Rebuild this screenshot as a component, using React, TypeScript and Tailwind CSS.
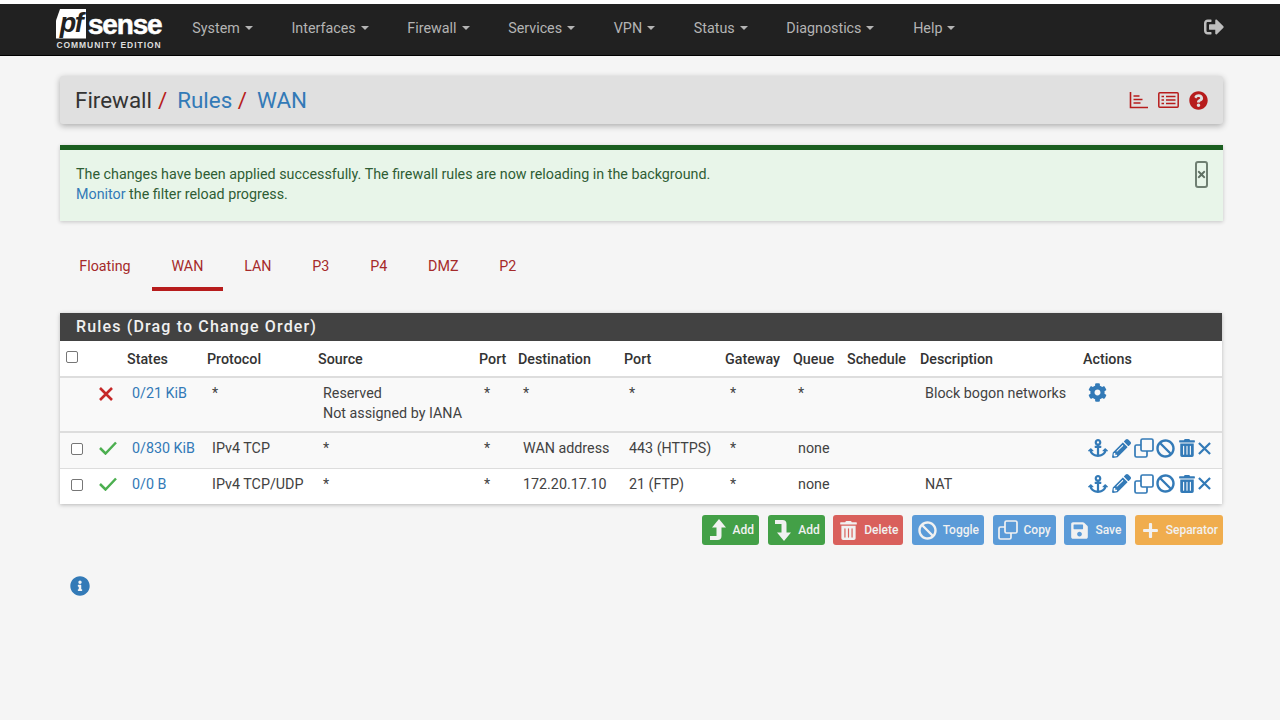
import { FaAnchor, FaBan, FaCog, FaInfoCircle, FaPencilAlt, FaPlus, FaQuestionCircle, FaSave, FaSignOutAlt, FaTimes, FaTrashAlt } from "react-icons/fa";

const menu = ["System", "Interfaces", "Firewall", "Services", "VPN", "Status", "Diagnostics", "Help"];
const tabs = ["Floating", "WAN", "LAN", "P3", "P4", "DMZ", "P2"];

function Logo() {
  return (
    <div className="ml-[55px] flex w-[108px] flex-col items-center [font-family:'Liberation_Sans',sans-serif]">
      <div className="flex h-[31px] w-full items-center">
        <span className="ml-[1px] flex h-[30px] w-[30px] shrink-0 items-center justify-center bg-white text-[27px] font-bold italic leading-none tracking-[-1.5px] text-[#212121] [clip-path:polygon(14%_0,100%_0,100%_100%,0_100%,0_40%)]">
          pf
        </span>
        <span className="ml-[2px] mt-[3px] text-[28px] font-bold leading-none tracking-[-1.2px] text-white [-webkit-text-stroke:0.5px_white]">sense</span>
      </div>
      <span className="mt-[1px] whitespace-nowrap text-[8.5px] font-bold leading-[11px] tracking-[0.95px] text-[#ddd]">
        COMMUNITY EDITION
      </span>
    </div>
  );
}

function ChartIcon() {
  return (
    <svg width="19" height="17" viewBox="0 0 19 17" fill="none" stroke="#b71c1c" strokeWidth="1.6">
      <path d="M1.5 0v15.5h17.5" />
      <path d="M4.5 4h6M4.5 7.5h9M4.5 11h7" />
    </svg>
  );
}

function ListIcon() {
  return (
    <svg width="21" height="16" viewBox="0 0 21 16" fill="none" stroke="#b71c1c" strokeWidth="1.5">
      <rect x="0.8" y="0.8" width="19.4" height="14.4" rx="1" />
      <path d="M3.5 4.5h2.5M3.5 8h2.5M3.5 11.5h2.5M8 4.5h9.5M8 8h9.5M8 11.5h9.5" />
    </svg>
  );
}

function CloneIcon({ size }: { size: number }) {
  return (
    <svg width={size} height={size} viewBox="0 0 20 20" fill="none" stroke="currentColor" strokeWidth="1.7">
      <rect x="7" y="1" width="12" height="12" rx="1.5" />
      <path d="M7 7H2.5A1.5 1.5 0 0 0 1 8.5v9A1.5 1.5 0 0 0 2.5 19h9a1.5 1.5 0 0 0 1.5-1.5V13" />
    </svg>
  );
}

function LevelIcon({ down }: { down?: boolean }) {
  return (
    <svg width="17" height="22" viewBox="0 0 17 22" fill="currentColor" className={down ? "-scale-y-100" : ""}>
      <path d="M10 0l7 8.5h-4.5V17a4 4 0 0 1-4 4H1v-4h6.5V8.5H3z" />
    </svg>
  );
}

function ThinX({ size, stroke, className }: { size: number; stroke: number; className: string }) {
  return (
    <svg width={size} height={size} viewBox="0 0 14 14" fill="none" stroke="currentColor" strokeWidth={stroke} className={className}>
      <path d="M1 1l12 12M13 1L1 13" />
    </svg>
  );
}

function RowActions() {
  return (
    <div className="flex h-[20px] items-center text-[#337ab7]">
      <span className="flex w-[24px]"><FaAnchor size={20} /></span>
      <span className="flex w-[22px]"><FaPencilAlt size={19} /></span>
      <span className="flex w-[22px]"><CloneIcon size={20} /></span>
      <span className="flex w-[22px]"><FaBan size={19} /></span>
      <span className="flex w-[20px]"><FaTrashAlt size={18} /></span>
      <span className="flex w-[14px]"><ThinX size={13} stroke={2.4} className="text-[#337ab7]" /></span>
    </div>
  );
}

const thClass = "px-[5px] text-left align-middle text-[14.3px] font-medium text-[#333]";
const tdClass = "px-[10px] pt-[5px] align-top";

function RuleRow({ states, protocol, dest, port, queue, desc, shaded }: { states: string; protocol: string; dest: string; port: string; queue: string; desc: string; shaded?: boolean }) {
  return (
    <tr className={`h-[36px] border-b border-[#ddd] last:border-b-0 ${shaded ? "bg-[#f9f9f9]" : "bg-white"}`}>
      <td className="pl-[11px] pt-[10px] align-top">
        <span className="block h-[12px] w-[12px] rounded-[2px] border border-[#767676] bg-white" />
      </td>
      <td className="pl-[10px] pt-[8px] align-top">
        <svg width="18" height="14" viewBox="0 0 18 14" fill="none" stroke="#4caf50" strokeWidth="2.5" className="block">
          <path d="M1 7l5.5 5.5L17 1.5" />
        </svg>
      </td>
      <td className={`${tdClass} whitespace-nowrap text-[#337ab7]`}>{states}</td>
      <td className={`${tdClass} whitespace-nowrap`}>{protocol}</td>
      <td className={tdClass}>*</td>
      <td className={tdClass}>*</td>
      <td className={`${tdClass} whitespace-nowrap`}>{dest}</td>
      <td className={`${tdClass} whitespace-nowrap`}>{port}</td>
      <td className={tdClass}>*</td>
      <td className={tdClass}>{queue}</td>
      <td className={tdClass} />
      <td className={tdClass}>{desc}</td>
      <td className={tdClass}><RowActions /></td>
    </tr>
  );
}

function ActionButton({ icon, label, color, width }: { icon: React.ReactNode; label: string; color: string; width: string }) {
  return (
    <button className={`flex h-[30px] items-center justify-between rounded-[3px] px-[5px] text-[12px] font-medium text-[#f1f1f1] ${color} ${width}`}>
      <span className="flex w-[20px] justify-center">{icon}</span>
      <span>{label}</span>
    </button>
  );
}

export default function App() {
  return (
    <div className="h-screen overflow-hidden bg-[#f5f5f5] text-[14.3px] leading-[20px] text-[#424242] [font-family:Roboto,sans-serif]">
      <div className="h-[4px] bg-white" />
      <header className="flex h-[52px] items-center border-b border-black bg-[#212121]">
        <Logo />
        <nav className="mb-[4px] ml-[10px] flex">
          {menu.map((item) => (
            <a key={item} className="flex items-center px-[19.35px] text-[#b4b4b4]">
              {item}
              <span className="ml-[5px] h-0 w-0 border-x-[4px] border-t-[4px] border-x-transparent border-t-[#b4b4b4]" />
            </a>
          ))}
        </nav>
        <div className="mb-[5px] ml-auto mr-[56px] text-[#bdbdbd]"><FaSignOutAlt size={20} /></div>
      </header>

      <main className="ml-[60px] w-[1163px]">
        <section className="mt-[20px] flex h-[48px] items-center justify-between rounded-[3px] bg-[#e0e0e0] px-[15px] shadow-[0_2px_6px_rgba(0,0,0,0.3)]">
          <h1 className="flex items-baseline text-[22.4px] font-normal leading-[30px]">
            <span className="text-[#333]">Firewall</span>
            <span className="ml-[6px] text-[#b71c1c]">/</span>
            <span className="ml-[10px] text-[#337ab7]">Rules</span>
            <span className="ml-[5.5px] text-[#b71c1c]">/</span>
            <span className="ml-[10px] text-[#337ab7]">WAN</span>
          </h1>
          <div className="flex items-center">
            <ChartIcon />
            <span className="ml-[10px]"><ListIcon /></span>
            <FaQuestionCircle size={19} className="ml-[10px] text-[#b71c1c]" />
          </div>
        </section>

        <section className="mt-[21px] flex h-[76px] justify-between border-t-[5px] border-[#1b5e20] bg-[#e8f5e9] pl-[16px] pr-[15px] pt-[14px] text-[#2f5d34] shadow-[0_1px_4px_rgba(0,0,0,0.2)]">
          <p>
            The changes have been applied successfully. The firewall rules are now reloading in the background.
            <br />
            <a className="text-[#337ab7]">Monitor</a> the filter reload progress.
          </p>
          <button className="-mt-[3px] flex h-[27px] w-[13px] items-center justify-center rounded-[3px] border-2 border-[#6f7f72] text-[#5f6f62]">
            <FaTimes size={11} className="shrink-0" />
          </button>
        </section>

        <nav className="mt-[22px] flex gap-[2.3px]">
          {tabs.map((tab) => (
            <a key={tab} className={`flex h-[48px] items-center px-[19.25px] pt-[2px] text-[#a52a2a] ${tab === "WAN" ? "border-b-[4px] border-[#b71c1c]" : "pb-[4px]"}`}>
              {tab}
            </a>
          ))}
        </nav>

        <section className="mt-[22px] w-[1162px] bg-white shadow-[0_1px_4px_rgba(0,0,0,0.25)]">
          <h2 className="flex h-[28px] items-center bg-[#424242] pl-[16px] text-[16px] font-medium tracking-[1.15px] text-[#f0f0f0]">
            Rules (Drag to Change Order)
          </h2>
          <table className="w-full table-fixed border-collapse">
            <colgroup>
              <col className="w-[29px]" />
              <col className="w-[33px]" />
              <col className="w-[80px]" />
              <col className="w-[111px]" />
              <col className="w-[161px]" />
              <col className="w-[39px]" />
              <col className="w-[106px]" />
              <col className="w-[101px]" />
              <col className="w-[68px]" />
              <col className="w-[54px]" />
              <col className="w-[73px]" />
              <col className="w-[163px]" />
              <col className="w-[144px]" />
            </colgroup>
            <thead>
              <tr className="h-[36px] border-b-2 border-[#ddd]">
                <th className="pb-[4px] pl-[6px] text-left align-middle">
                  <span className="block h-[12px] w-[12px] rounded-[2px] border border-[#767676] bg-white" />
                </th>
                <th />
                <th className={thClass}>States</th>
                <th className={thClass}>Protocol</th>
                <th className={thClass}>Source</th>
                <th className={thClass}>Port</th>
                <th className={thClass}>Destination</th>
                <th className={thClass}>Port</th>
                <th className={thClass}>Gateway</th>
                <th className={thClass}>Queue</th>
                <th className={thClass}>Schedule</th>
                <th className={thClass}>Description</th>
                <th className={thClass}>Actions</th>
              </tr>
            </thead>
            <tbody>
              <tr className="h-[55px] border-b-2 border-[#ddd] bg-[#f9f9f9]">
                <td />
                <td className="pl-[10px] pt-[9px] align-top"><ThinX size={14} stroke={2.6} className="text-[#c62828]" /></td>
                <td className={`${tdClass} text-[#337ab7]`}>0/21 KiB</td>
                <td className={tdClass}>*</td>
                <td className={`${tdClass} whitespace-nowrap`}>Reserved<br />Not assigned by IANA</td>
                <td className={tdClass}>*</td>
                <td className={tdClass}>*</td>
                <td className={tdClass}>*</td>
                <td className={tdClass}>*</td>
                <td className={tdClass}>*</td>
                <td className={tdClass} />
                <td className={`${tdClass} whitespace-nowrap`}>Block bogon networks</td>
                <td className={tdClass}><FaCog size={19} className="text-[#337ab7]" /></td>
              </tr>
              <RuleRow states="0/830 KiB" protocol="IPv4 TCP" dest="WAN address" port="443 (HTTPS)" queue="none" desc="" shaded />
              <RuleRow states="0/0 B" protocol="IPv4 TCP/UDP" dest="172.20.17.10" port="21 (FTP)" queue="none" desc="NAT" />
            </tbody>
          </table>
        </section>

        <div className="mt-[11px] flex justify-end gap-[8.67px]">
          <ActionButton icon={<LevelIcon />} label="Add" color="bg-[#43a047]" width="w-[57px]" />
          <ActionButton icon={<LevelIcon down />} label="Add" color="bg-[#43a047]" width="w-[57px]" />
          <ActionButton icon={<FaTrashAlt size={19} />} label="Delete" color="bg-[#d9605c]" width="w-[70px]" />
          <ActionButton icon={<FaBan size={19} />} label="Toggle" color="bg-[#5b9bd8]" width="w-[72px]" />
          <ActionButton icon={<CloneIcon size={20} />} label="Copy" color="bg-[#5b9bd8]" width="w-[63px]" />
          <ActionButton icon={<FaSave size={19} />} label="Save" color="bg-[#5b9bd8]" width="w-[62px]" />
          <ActionButton icon={<FaPlus size={17} />} label="Separator" color="bg-[#f0ad4e]" width="w-[88px]" />
        </div>

        <div className="ml-[10px] mt-[31px] text-[#337ab7]"><FaInfoCircle size={20} /></div>
      </main>
    </div>
  );
}
